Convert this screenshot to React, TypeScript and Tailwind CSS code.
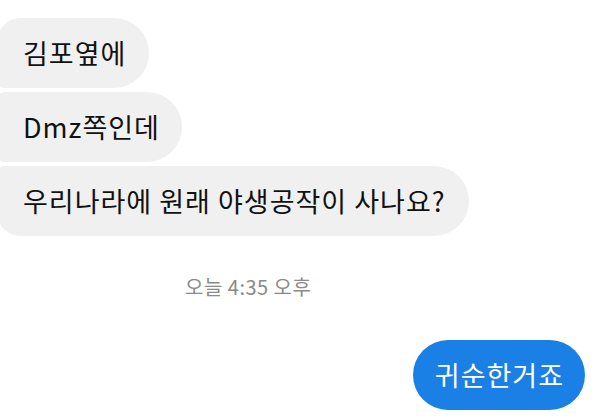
import React from "react";

const font = { fontFamily: '"Noto Sans CJK KR", "Noto Sans", sans-serif' };

export default function App() {
  return (
    <div className="w-[600px] h-[420px] bg-white overflow-hidden relative" style={font}>
      <div className="flex flex-col items-start gap-[4px] pt-[18px] -ml-[2px]">
        <div className="h-[70px] flex items-center pl-[25px] pr-[23px] bg-[#f0f0f0] text-[#111] text-[27px] tracking-[1px] rounded-tl-[22px] rounded-bl-[6px] rounded-r-[35px]">
          김포옆에
        </div>
        <div className="h-[70px] flex items-center pl-[25px] pr-[22px] bg-[#f0f0f0] text-[#111] text-[27px] tracking-[1px] rounded-l-[6px] rounded-r-[35px]">
          Dmz쪽인데
        </div>
        <div className="h-[70px] flex items-center pl-[25px] pr-[23px] bg-[#f0f0f0] text-[#111] text-[27px] tracking-[1px] rounded-tl-[6px] rounded-bl-[22px] rounded-r-[35px]">
          우리나라에 원래 야생공작이 사나요?
        </div>
      </div>
      <div className="pl-[185px] mt-[38px] text-[20px] tracking-[0.5px] text-[#8a8a8a] leading-[26px]">
        오늘 4:35 오후
      </div>
      <div className="flex justify-end pr-[15px] mt-[40px]">
        <div className="h-[70px] flex items-center pl-[22px] pr-[21px] bg-[#1a80e6] text-white text-[27px] tracking-[1px] rounded-[35px]">
          귀순한거죠
        </div>
      </div>
    </div>
  );
}
